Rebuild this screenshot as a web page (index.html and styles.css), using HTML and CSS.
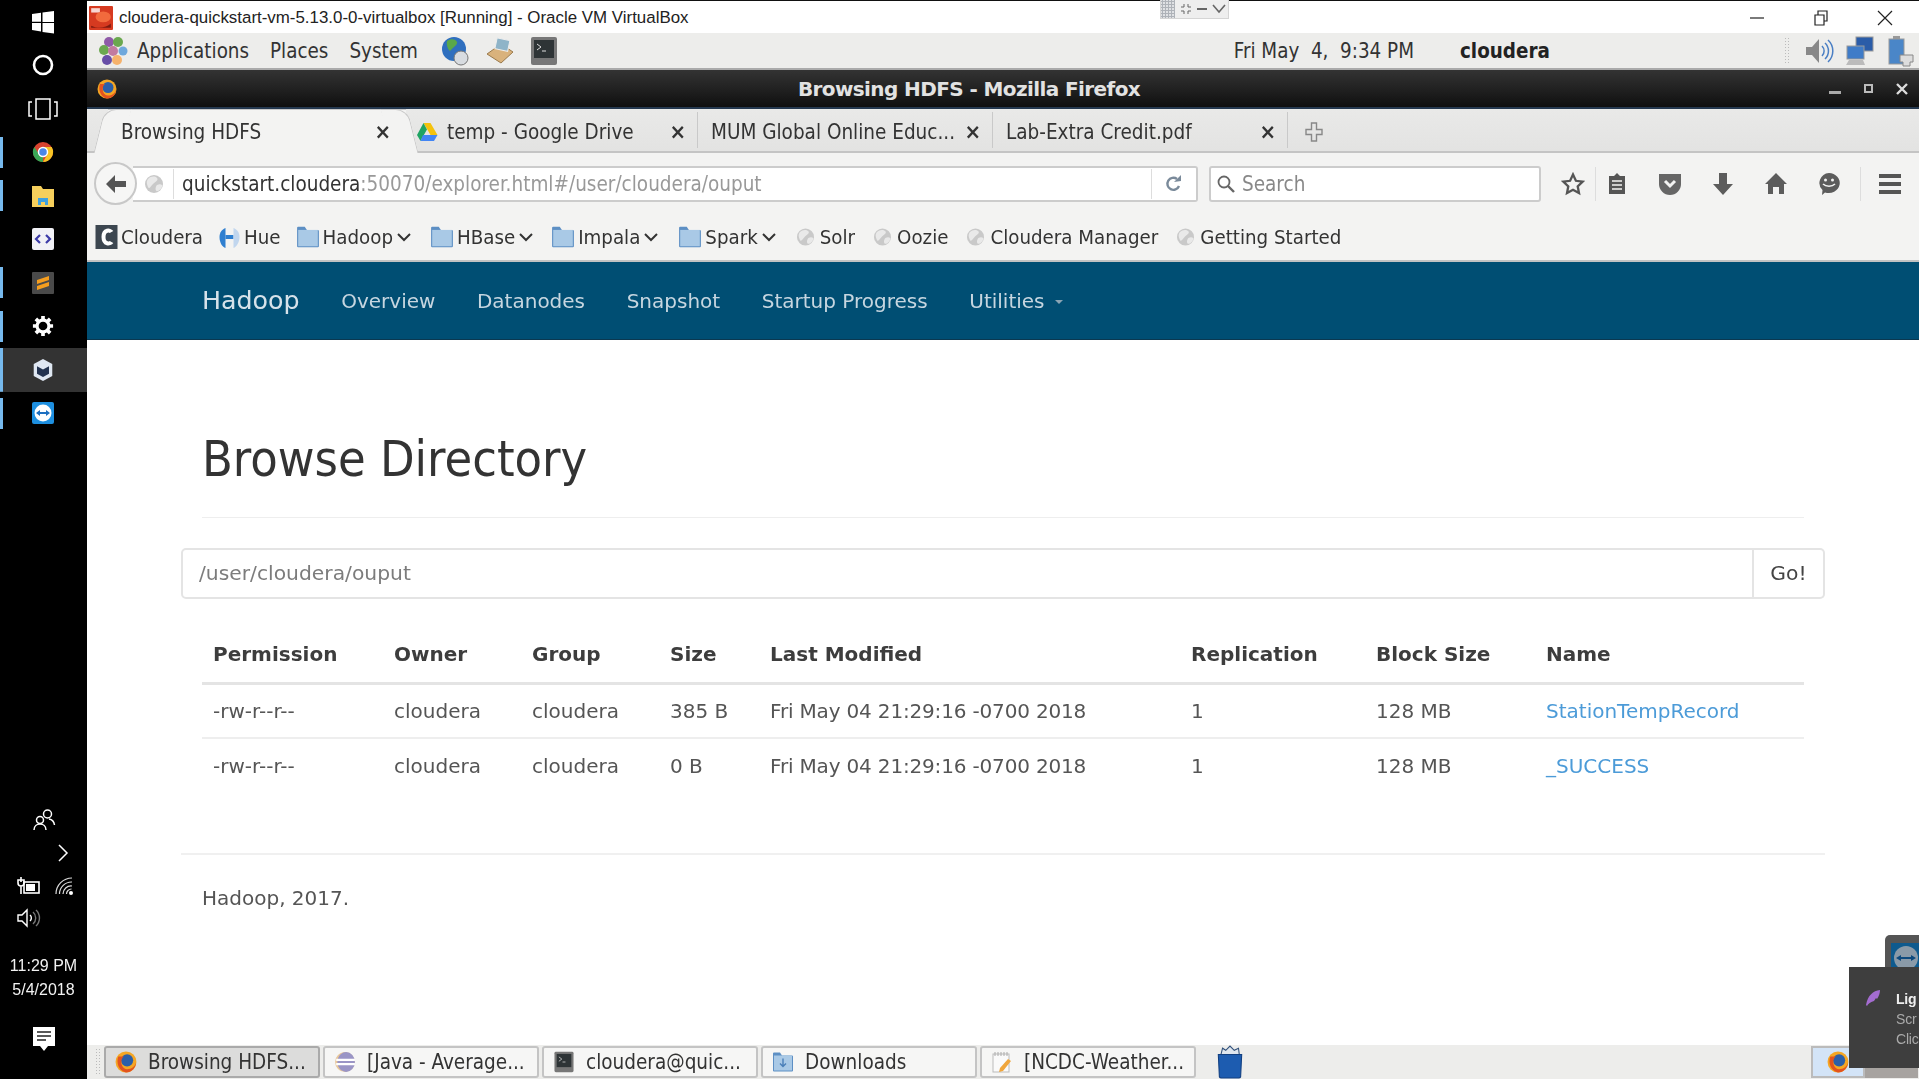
FILE: index.html
```html
<!DOCTYPE html>
<html lang="en">
<head>
  <meta charset="UTF-8">
  <title>Browsing HDFS</title>
  <link rel="stylesheet" href="styles.css">
</head>
<body>
  <aside class="winbar">
    <div class="winbar-top">
      <div class="wb-item"><svg width="24" height="24" viewBox="0 0 24 24"><path fill="#fff" d="M1 4l9-1.300v9H1zM11.500 2.500L23 1v11H11.500zM1 13h9v8.500L1 20zM11.500 13H23v10.500L11.500 22z"/></svg></div>
      <div class="wb-item"><svg width="24" height="24" viewBox="0 0 24 24"><circle cx="12" cy="12" r="9" fill="none" stroke="#fff" stroke-width="2.600"/></svg></div>
      <div class="wb-item"><svg width="30" height="22" viewBox="0 0 30 22"><path fill="none" stroke="#fff" stroke-width="1.500" d="M8 1h14v20H8zM4 4H1v14h3M26 4h3v14h-3"/></svg></div>
      <div class="wb-item on"><svg width="24" height="26" viewBox="0 0 24 24"><circle cx="12" cy="12" r="10" fill="#d8432f"/><path fill="#3aa757" d="M12 22a10 10 0 0 1-8.700-15L8 14l4 3z"/><path fill="#f7c325" d="M12 22a10 10 0 0 0 8.700-15H12l4 8z"/><circle cx="12" cy="12" r="4.500" fill="#4a86e8" stroke="#fff" stroke-width="1.500"/></svg></div>
      <div class="wb-item on"><svg width="24" height="24" viewBox="0 0 24 24"><path fill="#f6cf5c" d="M1 2h9l2 3h11v18H1z"/><path fill="#3fa1e0" d="M7 14h10v7h-3v-3h-4v3H7z"/></svg></div>
      <div class="wb-item"><svg width="24" height="26" viewBox="0 0 24 24"><rect x="1" y="1" width="22" height="22" rx="2" fill="#f1f1f6"/><path fill="none" stroke="#3b3aa8" stroke-width="2.200" d="M9 8l-4 4 4 4M15 8l4 4-4 4"/></svg></div>
      <div class="wb-item on"><svg width="24" height="26" viewBox="0 0 24 24"><rect x="1" y="1" width="22" height="22" rx="1" fill="#4a4a4a"/><path fill="#f59e1f" d="M18 5v4L6 13V9zM18 11v4L6 19v-4z"/></svg></div>
      <div class="wb-item on"><svg width="22" height="22" viewBox="0 0 24 24"><circle cx="12" cy="12" r="6.500" fill="none" stroke="#fff" stroke-width="3.500"/><path stroke="#fff" stroke-width="4" d="M12 1v5M12 18v5M1 12h5M18 12h5M4.200 4.200l3.500 3.500M16.300 16.300l3.500 3.500M4.200 19.800l3.500-3.500M16.300 7.700l3.500-3.500"/></svg></div>
      <div class="wb-item on active"><svg width="22" height="24" viewBox="0 0 20 22"><path fill="#dfe7f2" d="M10 1l8.500 4.500v11L10 21l-8.500-4.500v-11z"/><path fill="#22324f" d="M10 10.500l5.500-3v7L10 17.500zM4.500 7.500l5.500 3v7l-5.500-3z"/></svg></div>
      <div class="wb-item on"><svg width="24" height="24" viewBox="0 0 24 24"><rect x="1" y="1" width="22" height="22" rx="2" fill="#1d8fe0"/><circle cx="12" cy="12" r="8.500" fill="#fff"/><path fill="#1d6fc0" d="M5 12l4-3v2h6V9l4 3-4 3v-2H9v2z"/></svg></div>
    </div>
    <div class="winbar-bottom">
      <svg class="wb-people" width="24" height="24" viewBox="0 0 24 24"><g fill="none" stroke="#fff" stroke-width="1.500"><circle cx="15.500" cy="6" r="4"/><circle cx="8" cy="12" r="3.500"/><path d="M2 22c0-4 3-6 6-6s6 2 6 6M17 11c3 .5 5 2.500 5.500 6"/></g></svg>
      <svg class="wb-chev" width="12" height="20" viewBox="0 0 12 20"><path fill="none" stroke="#fff" stroke-width="1.500" d="M2 2l8 8-8 8"/></svg>
      <div class="wb-tray">
        <svg width="24" height="20" viewBox="0 0 24 20"><g fill="none" stroke="#fff" stroke-width="1.600"><rect x="7" y="6" width="15" height="11" /><path d="M4 1v5M1 4h6v3a3 3 0 0 1-6 0zM4 10v8"/></g><rect x="9" y="8" width="9" height="7" fill="#fff"/></svg>
        <svg width="20" height="20" viewBox="0 0 20 20"><g fill="none" stroke="#ddd" stroke-width="1.200"><path d="M1 18A16 16 0 0 1 17 2M4.500 18A12 12 0 0 1 17 6M8 18a8 8 0 0 1 9-8M11.500 18a5 5 0 0 1 5-5"/></g><circle cx="16" cy="17" r="2" fill="#fff"/></svg>
      </div>
      <div class="wb-tray">
        <svg width="24" height="22" viewBox="0 0 24 22"><g fill="none" stroke="#fff" stroke-width="1.400"><path d="M1 8h4l5-5v16l-5-5H1z"/><path d="M13 8a4 4 0 0 1 0 6"/><path stroke="#777" d="M16 5a8 8 0 0 1 0 12M19 3a11 11 0 0 1 0 16"/></g></svg>
        <span class="wb-spacer"></span>
      </div>
      <div class="wb-clock">11:29 PM<br>5/4/2018</div>
      <svg class="wb-note" width="24" height="26" viewBox="0 0 24 26"><path fill="#fff" d="M1 1h22v19h-7l-4 5-4-5H1z"/><path stroke="#222" stroke-width="1.600" d="M5 6h14M5 10h14M5 14h9"/></svg>
    </div>
  </aside>

  <div class="vm">
    <header class="vbox-title">
      <svg width="24" height="24" viewBox="0 0 22 22"><rect width="22" height="22" rx="1" fill="#d63a20"/><path fill="#7d1a10" d="M2 18c6 3 14 2 18-2v4H2z"/><path fill="#fff" d="M2 2h8v4H2z" opacity=".8"/><ellipse cx="13" cy="10" rx="7" ry="5" fill="#f26a3d"/></svg>
      <span class="vbox-name">cloudera-quickstart-vm-5.13.0-0-virtualbox [Running] - Oracle VM VirtualBox</span>
      <div class="win-btns">
        <svg width="16" height="16" viewBox="0 0 16 16"><path stroke="#222" stroke-width="1.200" d="M1 8h14"/></svg>
        <svg width="16" height="16" viewBox="0 0 16 16"><path fill="none" stroke="#222" stroke-width="1.200" d="M2 5h9v10H2zM5 5V1h9v10h-3"/></svg>
        <svg width="16" height="16" viewBox="0 0 16 16"><path stroke="#222" stroke-width="1.200" d="M1 1l14 14M15 1L1 15"/></svg>
      </div>
    </header>

    <div class="gnome-panel">
      <svg class="g-apps" width="30" height="30" viewBox="0 0 30 30"><circle cx="11" cy="6" r="5" fill="#8e5aa8"/><circle cx="20" cy="6" r="5" fill="#6aa84f"/><circle cx="6" cy="14" r="5" fill="#6aa84f"/><circle cx="25" cy="15" r="4.500" fill="#6fa8dc"/><circle cx="15" cy="15" r="5" fill="#c27ba0"/><circle cx="9" cy="24" r="5" fill="#674ea7"/><circle cx="19" cy="24" r="5" fill="#f6b26b"/></svg>
      <span class="g-menu">Applications</span>
      <span class="g-menu">Places</span>
      <span class="g-menu">System</span>
      <div class="g-launch">
        <svg width="30" height="32" viewBox="0 0 30 32"><circle cx="14" cy="14" r="12" fill="#2f6fbe"/><path fill="#5aa84a" d="M7 6c4-3 9-2 10 1s-4 5-6 8-5-5-4-9z"/><circle cx="21" cy="23" r="7" fill="#d8dce0" stroke="#777"/></svg>
        <svg width="30" height="30" viewBox="0 0 30 30"><path fill="#d9b27c" stroke="#9a7a4c" d="M2 18L16 8l12 8-12 11z"/><rect x="11" y="3" width="13" height="11" fill="#8fb4c8" stroke="#eee" transform="rotate(12 17 8)"/></svg>
        <svg width="28" height="30" viewBox="0 0 28 30"><rect x="1" y="1" width="26" height="28" rx="2" fill="#777"/><rect x="4" y="4" width="20" height="18" fill="#2e3436"/><path fill="none" stroke="#ddd" d="M7 8l4 3-4 3M12 15h4"/></svg>
      </div>
      <span class="g-clock">Fri May&nbsp; 4,&nbsp; 9:34 PM</span>
      <span class="g-user">cloudera</span>
      <div class="g-tray">
        <span class="tray-grip"></span>
        <svg width="30" height="30" viewBox="0 0 30 30"><path fill="#888" d="M2 11h6l7-8v24l-7-8H2z"/><g fill="none" stroke="#4a7fc4" stroke-width="1.500"><path d="M18 10a7 7 0 0 1 0 10M21 7a11 11 0 0 1 0 16M24 4a15 15 0 0 1 0 22"/></g></svg>
        <svg width="30" height="30" viewBox="0 0 30 30"><rect x="11" y="1" width="17" height="14" fill="#2a5ca8" stroke="#999"/><rect x="2" y="10" width="17" height="13" fill="#3f7cc8" stroke="#999"/><path fill="#bbb" d="M4 24h14l2 5H1z"/></svg>
        <svg width="30" height="32" viewBox="0 0 30 32"><rect x="3" y="4" width="15" height="25" fill="#4a86c8" stroke="#999"/><rect x="7" y="1" width="7" height="3" fill="#999"/><path fill="#ddd" stroke="#888" d="M14 20h13v7h-3v4h-7v-4h-3z"/></svg>
      </div>
    </div>

    <div class="ff-title">
      <svg class="ff-logo ff-logo-title" width="20" height="20" viewBox="0 0 20 20"><use href="#fox"/></svg>
      <span class="ff-name">Browsing HDFS - Mozilla Firefox</span>
      <div class="ff-btns">
        <span class="ff-min"></span>
        <span class="ff-max"></span>
        <svg width="12" height="12" viewBox="0 0 12 12"><path stroke="#ddd" stroke-width="2.400" d="M1 1l10 10M11 1L1 11"/></svg>
      </div>
    </div>

    <div class="tabstrip">
      <div class="tab tab-current"><span class="tab-label">Browsing HDFS</span><span class="tab-x">×</span></div>
      <div class="tab tab-drive"><svg width="22" height="20" viewBox="0 0 22 20"><path fill="#f4c20d" d="M7.500 1h7l7 12h-7z"/><path fill="#1fa463" d="M7.500 1L1 13l3.500 6L11 7.500z"/><path fill="#4285f4" d="M7 13h14.500L18 19H4.500z"/></svg><span class="tab-label">temp - Google Drive</span><span class="tab-x">×</span></div>
      <div class="tab tab-mum"><span class="tab-label">MUM Global Online Educ...</span><span class="tab-x">×</span></div>
      <div class="tab tab-lab"><span class="tab-label">Lab-Extra Credit.pdf</span><span class="tab-x">×</span></div>
      <svg class="tab-new" width="18" height="20" viewBox="0 0 18 20"><path fill="none" stroke="#888" stroke-width="1.400" d="M6.500 1h5v6.500H17v5h-5.500V19h-5v-6.500H1v-5h5.500z"/></svg>
    </div>

    <div class="navbar-ff">
      <div class="back-btn"><svg width="22" height="20" viewBox="0 0 22 20"><path fill="#555" d="M10 1v6h11v6H10v6L1 10z"/></svg></div>
      <div class="urlbar">
        <svg class="globe" width="20" height="20" viewBox="0 0 20 20"><use href="#globe"/></svg>
        <span class="url-text"><b>quickstart.cloudera</b>:50070/explorer.html#/user/cloudera/ouput</span>
        <span class="url-reload"><svg width="18" height="18" viewBox="0 0 18 18"><path fill="none" stroke="#7a8a9a" stroke-width="2.400" d="M14 11a6 6 0 1 1-2-7"/><path fill="#7a8a9a" d="M9 7l7-1V0z"/></svg></span>
      </div>
      <div class="searchbar">
        <svg width="20" height="20" viewBox="0 0 20 20"><circle cx="8" cy="8" r="5.500" fill="none" stroke="#666" stroke-width="1.800"/><path stroke="#666" stroke-width="2.400" d="M12 12l6 6"/></svg>
        <span>Search</span>
      </div>
      <div class="ff-tools">
        <svg class="t-star" width="24" height="24" viewBox="0 0 24 24"><path fill="none" stroke="#555" stroke-width="2.300" d="M12 2.500l2.900 6.300 6.800.8-5 4.700 1.300 6.800-6-3.400-6 3.400 1.300-6.800-5-4.700 6.800-.8z"/></svg>
        <svg class="t-list" width="20" height="24" viewBox="0 0 20 24"><path fill="#555" d="M7 4l3-3 3 3h5v18H2V4z"/><path stroke="#f3f3f2" stroke-width="1.500" d="M5 9h10M5 13h10M5 17h10"/></svg>
        <svg width="24" height="24" viewBox="0 0 24 24"><path fill="#666" d="M1 2h22v10a11 11 0 0 1-22 0z"/><path fill="none" stroke="#f3f3f2" stroke-width="3" d="M7 9l5 5 5-5"/></svg>
        <svg width="24" height="24" viewBox="0 0 24 24"><path fill="#5c5c5c" d="M8 1h8v11h6L12 23 2 12h6z"/></svg>
        <svg width="24" height="24" viewBox="0 0 24 24"><path fill="#5c5c5c" d="M12 1l11 11h-3v10h-5v-7H9v7H4V12H1z"/></svg>
        <svg width="24" height="26" viewBox="0 0 24 24"><path fill="#5c5c5c" d="M12 1a11 10 0 1 1-4 19.400L5 23l.5-5A10.500 10 0 0 1 12 1z"/><circle cx="8.500" cy="8" r="1.500" fill="#f3f3f2"/><circle cx="15.500" cy="8" r="1.500" fill="#f3f3f2"/><path fill="none" stroke="#f3f3f2" stroke-width="1.600" d="M6 12c3 3 9 3 12 0"/></svg>
        <svg class="t-menu" width="24" height="22" viewBox="0 0 24 22"><path stroke="#555" stroke-width="4" d="M1 3h22M1 11h22M1 19h22"/></svg>
      </div>
    </div>

    <div class="bookmarks">
      <div class="bm bm-tight"><svg width="23" height="24" viewBox="0 0 22 24"><rect width="22" height="24" fill="#3c4650"/><path fill="none" stroke="#fff" stroke-width="4" d="M16 7c-1-2-8-3-8 5s7 7 8 5"/></svg>Cloudera</div>
      <div class="bm bm-tight"><svg width="23" height="22" viewBox="0 0 22 22"><path fill="#2f7fd0" d="M1 11c0-5 3-8 6-9v20c-3-1-6-5-6-11z"/><path fill="#2f7fd0" d="M7 9h8v4H7z"/><path fill="#c1d6ee" d="M15 2c3 1 6 4 6 9s-3 10-6 11z"/></svg>Hue</div>
      <div class="bm bm-hadoop"><svg class="folder" width="24" height="24" viewBox="1 2 22 21"><use href="#folder"/></svg>Hadoop<svg class="caret" width="14" height="10" viewBox="0 0 14 10"><path fill="none" stroke="#333" stroke-width="2" d="M1 2l6 6 6-6"/></svg></div>
      <div class="bm bm-hbase"><svg class="folder" width="24" height="24" viewBox="1 2 22 21"><use href="#folder"/></svg>HBase<svg class="caret" width="14" height="10" viewBox="0 0 14 10"><path fill="none" stroke="#333" stroke-width="2" d="M1 2l6 6 6-6"/></svg></div>
      <div class="bm bm-impala"><svg class="folder" width="24" height="24" viewBox="1 2 22 21"><use href="#folder"/></svg>Impala<svg class="caret" width="14" height="10" viewBox="0 0 14 10"><path fill="none" stroke="#333" stroke-width="2" d="M1 2l6 6 6-6"/></svg></div>
      <div class="bm bm-spark"><svg class="folder" width="24" height="24" viewBox="1 2 22 21"><use href="#folder"/></svg>Spark<svg class="caret" width="14" height="10" viewBox="0 0 14 10"><path fill="none" stroke="#333" stroke-width="2" d="M1 2l6 6 6-6"/></svg></div>
      <div class="bm bm-page"><svg width="19" height="20" viewBox="0 0 20 20"><use href="#globe"/></svg>Solr</div>
      <div class="bm bm-page"><svg width="19" height="20" viewBox="0 0 20 20"><use href="#globe"/></svg>Oozie</div>
      <div class="bm bm-page"><svg width="19" height="20" viewBox="0 0 20 20"><use href="#globe"/></svg>Cloudera Manager</div>
      <div class="bm bm-page"><svg width="19" height="20" viewBox="0 0 20 20"><use href="#globe"/></svg>Getting Started</div>
    </div>

    <nav class="hadoop-nav">
      <span class="brand">Hadoop</span>
      <span class="nav-link">Overview</span>
      <span class="nav-link">Datanodes</span>
      <span class="nav-link">Snapshot</span>
      <span class="nav-link">Startup Progress</span>
      <span class="nav-link">Utilities <i class="nav-caret"></i></span>
    </nav>

    <main class="page">
      <div class="page-header"><h1>Browse Directory</h1></div>

      <div class="path-form">
        <div class="path-input">/user/cloudera/ouput</div>
        <div class="go-btn">Go!</div>
      </div>

      <table class="listing">
        <thead>
          <tr>
            <th class="c-perm">Permission</th>
            <th class="c-owner">Owner</th>
            <th class="c-group">Group</th>
            <th class="c-size">Size</th>
            <th class="c-mod">Last Modified</th>
            <th class="c-rep">Replication</th>
            <th class="c-block">Block Size</th>
            <th>Name</th>
          </tr>
        </thead>
        <tbody>
          <tr>
            <td>-rw-r--r--</td><td>cloudera</td><td>cloudera</td><td>385 B</td>
            <td class="d-mod">Fri May 04 21:29:16 -0700 2018</td><td>1</td><td>128 MB</td>
            <td><a href="#">StationTempRecord</a></td>
          </tr>
          <tr>
            <td>-rw-r--r--</td><td>cloudera</td><td>cloudera</td><td>0 B</td>
            <td class="d-mod">Fri May 04 21:29:16 -0700 2018</td><td>1</td><td>128 MB</td>
            <td><a href="#">_SUCCESS</a></td>
          </tr>
        </tbody>
      </table>

      <hr class="foot-rule">
      <p class="foot">Hadoop, 2017.</p>
    </main>

    <footer class="gnome-tasks">
      <span class="grip"></span>
      <div class="task task-on"><svg width="22" height="22" viewBox="0 0 20 20"><use href="#fox"/></svg><span>Browsing HDFS...</span></div>
      <div class="task"><svg width="22" height="22" viewBox="0 0 20 20"><circle cx="10" cy="10" r="9" fill="#e8c79a"/><ellipse cx="11" cy="10" rx="8" ry="9" fill="#9a95c6"/><path stroke="#fff" stroke-width="2" d="M2 8h17M2 12h17"/></svg><span>[Java - Average...</span></div>
      <div class="task"><svg width="22" height="22" viewBox="0 0 28 30"><rect x="1" y="1" width="26" height="28" rx="2" fill="#777"/><rect x="4" y="4" width="20" height="18" fill="#2e3436"/><path fill="none" stroke="#ddd" d="M7 8l4 3-4 3M12 15h4"/></svg><span>cloudera@quic...</span></div>
      <div class="task"><svg width="22" height="22" viewBox="1 2 22 21"><use href="#folder"/><path fill="none" stroke="#4a7fb8" stroke-width="1.400" d="M12 9v8M9 14l3 3 3-3"/></svg><span>Downloads</span></div>
      <div class="task"><svg width="22" height="22" viewBox="0 0 22 22"><rect x="2" y="3" width="16" height="18" fill="#fafafa" stroke="#bbb"/><path stroke="#aaa" d="M4 1v4M7 1v4M10 1v4M13 1v4M16 1v4"/><path fill="#f0a63c" d="M17 8l3 2-8 10-4 1 1-4z"/></svg><span>[NCDC-Weather...</span></div>
      <svg class="trash" width="28" height="34" viewBox="0 0 26 32"><path fill="#dfe6ee" stroke="#31507a" d="M4 11l2-8 3 2 4-4 4 4 4-2 1 8z"/><path fill="#1d5cb0" stroke="#123f80" d="M2 9h22l-1 21a2 2 0 0 1-2 1H5a2 2 0 0 1-2-1z"/></svg>
      <div class="pager"><div class="pager-on"><svg width="22" height="22" viewBox="0 0 20 20"><use href="#fox"/></svg></div><div class="pager-off"></div></div>
    </footer>
  </div>

  <!-- stuff that floats over the vm window -->
  <div class="vm-mini">
    <span class="mini-grip"></span>
    <svg width="12" height="12" viewBox="0 0 12 12"><path fill="none" stroke="#666" d="M1 4h3V1M8 1v3h3M1 8h3v3M11 8H8v3"/></svg>
    <span class="mini-dash"></span>
    <svg width="14" height="10" viewBox="0 0 14 10"><path fill="none" stroke="#666" stroke-width="1.600" d="M1 1l6 7 6-7"/></svg>
  </div>
  <div class="tv-tab"><svg width="30" height="30" viewBox="0 0 30 30"><rect width="30" height="30" fill="#0e5a8e"/><circle cx="15" cy="15" r="12" fill="#8a9aa8"/><path fill="#0e4a7e" d="M5 15l5-3v2h10v-2l5 3-5 3v-2H10v2z"/></svg></div>
  <div class="toast">
    <svg width="16" height="18" viewBox="0 0 16 18"><path fill="#a46cd0" d="M15 1C8 2 3 6 1 16l1 1c1-2 3-4 7-5l2-3 1 1c2-3 3-6 3-9z"/></svg>
    <div class="toast-text"><b>Lig</b><span>Scr</span><span>Clic</span></div>
  </div>

  <svg class="defs" width="0" height="0">
    <defs>
      <g id="fox"><circle cx="10" cy="10" r="9.500" fill="#f5a623"/><circle cx="11" cy="8.500" r="5.500" fill="#2c5fa8"/><path fill="#e2531f" d="M3 5c-2 5 0 13 7 14.500 5 0 9-4 9-9-1 4-4 6-8 6S5 12 6 8c0-1 1-2 2-3-2 0-3 0-5 0z"/></g>
      <g id="globe"><circle cx="10" cy="10" r="9" fill="#c9c9c9"/><path fill="#e9e9e9" d="M4 5c3-3 7-3 9-1s-2 4-4 6-4 6-5 3-2-5 0-8zM13 11c2-1 4-1 5 0s-1 5-4 6-3-4-1-6z"/></g>
      <g id="folder"><path fill="#5d8fc4" d="M2 4a1 1 0 0 1 1-1h6l2 3h10a1 1 0 0 1 1 1v14a1 1 0 0 1-1 1H3a1 1 0 0 1-1-1z"/><path fill="#a9c9e6" d="M3 6h18v15H3z"/></g>
    </defs>
  </svg>
</body>
</html>
```

FILE: styles.css
```css
* {
  box-sizing: border-box;
}
html, body {
  margin: 0;
  height: 100%;
  overflow: hidden;
}
body {
  display: flex;
  width: 1919px;
  height: 1079px;
  background: #fff;
  font-family: "DejaVu Sans", sans-serif;
  color: #333;
  position: relative;
}
svg {
  flex: none;
  display: block;
}
.defs {
  position: absolute;
}

/* windows taskbar on the left */
.winbar {
  width: 87px;
  flex: none;
  background: #000;
  display: flex;
  flex-direction: column;
  justify-content: space-between;
  color: #fff;
  filter: blur(.4px);
}
.wb-item {
  height: 43.500px;
  display: flex;
  align-items: center;
  justify-content: center;
  padding-right: 1px;
}
.wb-item.on {
  background: linear-gradient(#76b9ed, #76b9ed) left center / 3px 31px no-repeat;
}
.wb-item.active {
  background: linear-gradient(#76b9ed, #76b9ed) left center / 3px 100% no-repeat, #333;
}
.winbar-bottom {
  display: flex;
  flex-direction: column;
  align-items: center;
  padding-bottom: 27px;
}
.wb-chev {
  align-self: flex-end;
  margin: 11px 18px 7px 0;
}
.wb-tray {
  display: flex;
  width: 100%;
  justify-content: space-between;
  align-items: center;
  padding: 0 12px 0 17px;
  height: 32px;
}
.wb-spacer {
  width: 20px;
}
.wb-clock {
  font-family: "Liberation Sans", sans-serif;
  font-size: 16px;
  line-height: 24px;
  text-align: center;
  margin-top: 20px;
  margin-bottom: 24px;
  color: #f2f2f2;
}

.vm {
  flex: 1;
  min-width: 0;
  display: flex;
  flex-direction: column;
  filter: blur(.4px);
}

/* virtualbox title */
.vbox-title {
  height: 33px;
  flex: none;
  border-top: 1px solid #111;
  background: #fff;
  display: flex;
  align-items: center;
  padding: 1px 0 0 2px;
  font-family: "Liberation Sans", sans-serif;
  font-size: 16.900px;
  color: #222;
}
.vbox-name {
  margin-left: 6px;
}
.win-btns {
  margin-left: auto;
  display: flex;
  gap: 48px;
  padding-right: 26px;
}

/* gnome panel */
.gnome-panel {
  height: 37px;
  flex: none;
  background: #ededeb;
  display: flex;
  align-items: center;
  padding-left: 11px;
  border-bottom: 2px solid #aaa;
  font-family: "DejaVu Sans Condensed", "DejaVu Sans", sans-serif;
  font-stretch: condensed;
  font-size: 20.400px;
  color: #333;
}
.g-apps {
  margin-right: 9px;
}
.g-menu {
  margin-right: 21px;
}
.g-launch {
  display: flex;
  gap: 15px;
  margin-left: 1px;
  align-items: center;
}
.g-clock {
  margin-left: 676px;
}
.g-user {
  font-weight: bold;
  margin-left: 46px;
  color: #222;
}
.g-tray {
  margin-left: auto;
  display: flex;
  gap: 11px;
  align-items: center;
  height: 32px;
  padding-right: 3px;
}
.tray-grip {
  width: 5px;
  height: 28px;
  margin-right: 4px;
  background: radial-gradient(#bbb 1px, transparent 1px) 0 0 / 3px 3px;
}

/* firefox */
.ff-title {
  height: 39px;
  flex: none;
  background: linear-gradient(#333, #1e1e1e 60%, #0f0f0f);
  border-bottom: 2px solid #24384f;
  display: flex;
  align-items: center;
  position: relative;
  padding-left: 10px;
}
.ff-name {
  flex: 1;
  text-align: center;
  font-size: 20px;
  font-weight: bold;
  letter-spacing: -.600px;
  color: #e2e2e2;
  padding-right: 8px;
}
.ff-btns {
  display: flex;
  align-items: center;
  gap: 23px;
  padding-right: 11px;
}
.ff-min {
  width: 12px;
  height: 3px;
  background: #aaa;
  margin-top: 8px;
}
.ff-max {
  width: 9px;
  height: 9px;
  border: 2px solid #bbb;
}

.tabstrip {
  height: 44px;
  flex: none;
  background: linear-gradient(#e9e9e8, #e3e3e2);
  border-bottom: 2px solid #c4c4c4;
  display: flex;
  align-items: stretch;
  padding-left: 21px;
  font-family: "DejaVu Sans Condensed", "DejaVu Sans", sans-serif;
  font-stretch: condensed;
  font-size: 20.500px;
  color: #333;
}
.tab {
  display: flex;
  align-items: center;
  padding: 3px 11px 0 13px;
  position: relative;
}
.tab-x {
  margin-left: auto;
  font-size: 22px;
  font-weight: bold;
  color: #333;
}
.tab-current {
  width: 298px;
  background: #f3f3f2;
  border-top: 1px solid #c8c8c8;
  margin-bottom: -2px;
  padding: 0 15px 0 13px;
}
.tab-current > * {
  position: relative;
  z-index: 1;
}
/* the sloped ends of the current tab */
.tab-current::before,
.tab-current::after {
  content: "";
  position: absolute;
  top: -1px;
  bottom: 0;
  width: 26px;
  background: #f3f3f2;
  border-top: 1px solid #c8c8c8;
}
.tab-current::before {
  left: -9px;
  border-left: 1px solid #c8c8c8;
  border-radius: 12px 0 0 0;
  transform: skewX(-14deg);
}
.tab-current::after {
  right: -7px;
  border-right: 1px solid #c8c8c8;
  border-radius: 0 12px 0 0;
  transform: skewX(14deg);
}
.tab-drive {
  width: 292px;
  gap: 9px;
  padding-left: 10px;
  border-right: 1px solid #c9c9c9;
  margin: 3px 0;
}
.tab-mum {
  width: 295px;
  border-right: 1px solid #c9c9c9;
  margin: 3px 0;
}
.tab-lab {
  width: 295px;
  border-right: 1px solid #c9c9c9;
  margin: 3px 0;
}
.tab-new {
  align-self: center;
  margin: 3px 0 0 17px;
}

.navbar-ff {
  height: 54px;
  flex: none;
  background: #f3f3f2;
  display: flex;
  align-items: center;
  padding-left: 7px;
  padding-top: 7px;
  position: relative;
  font-family: "DejaVu Sans Condensed", "DejaVu Sans", sans-serif;
  font-stretch: condensed;
  font-size: 20.500px;
}
.back-btn {
  width: 43px;
  height: 43px;
  border-radius: 50%;
  border: 2px solid #c8c8c8;
  background: #f6f6f5;
  display: flex;
  align-items: center;
  justify-content: center;
  position: relative;
  z-index: 1;
  flex: none;
}
.urlbar {
  width: 1065px;
  height: 36px;
  margin-left: -4px;
  background: #fff;
  border: 2px solid #ccc;
  border-left: none;
  border-radius: 0 3px 3px 0;
  display: flex;
  align-items: center;
  padding-left: 11px;
  color: #999;
}
.url-text {
  margin-left: 9px;
  padding-left: 8px;
  border-left: 1px solid #ddd;
  flex: 1;
  line-height: 30px;
}
.url-text b {
  font-weight: normal;
  color: #333;
}
.url-reload {
  width: 45px;
  height: 30px;
  border-left: 1px solid #ddd;
  display: flex;
  align-items: center;
  justify-content: center;
}
.searchbar {
  width: 332px;
  height: 36px;
  margin-left: 11px;
  background: #fff;
  border: 2px solid #ccc;
  border-radius: 3px;
  display: flex;
  align-items: center;
  gap: 6px;
  padding-left: 5px;
  color: #888;
}
.ff-tools {
  display: flex;
  align-items: center;
  gap: 29px;
  margin-left: 20px;
}
.t-star {
  margin-right: -19px;
}
.t-list {
  box-sizing: content-box;
  padding: 5px 0 5px 11px;
  border-left: 1px solid #ddd;
  margin-right: 2px;
}
.t-menu {
  box-sizing: content-box;
  padding: 6px 0 6px 17px;
  border-left: 1px solid #ddd;
  margin-left: -10px;
}

.bookmarks {
  height: 55px;
  flex: none;
  background: #f3f3f2;
  border-bottom: 2px solid #c2c2c2;
  display: flex;
  align-items: center;
  gap: 17px;
  padding: 7px 0 0 8px;
  font-family: "DejaVu Sans Condensed", "DejaVu Sans", sans-serif;
  font-stretch: condensed;
  font-size: 20.300px;
  color: #333;
}
.bm {
  display: flex;
  align-items: center;
  gap: 3px;
}
.bm-tight {
  margin-right: -2px;
}
.bm-hadoop {
  margin-right: 2px;
}
.bm-hbase {
  margin-right: 1px;
}
.bm-impala {
  margin-right: 3px;
}
.bm-spark {
  margin-right: 2px;
}
.bm-page {
  gap: 5px;
  margin-left: 1px;
}
.caret {
  margin-left: 1px;
}

/* hadoop page, bootstrap-ish */
.hadoop-nav {
  height: 78px;
  flex: none;
  background: #004e73;
  border-bottom: 1px solid #0b3850;
  display: flex;
  align-items: center;
  padding-left: 115px;
  color: #c6d6e0;
  font-size: 20px;
  gap: 41.600px;
}
.brand {
  font-size: 25.300px;
  color: #d6e2ea;
}
.nav-caret {
  display: inline-block;
  width: 0;
  height: 0;
  border: 4px solid transparent;
  border-top-color: #8aa4b4;
  border-bottom: none;
  vertical-align: middle;
  margin-left: 4px;
}
.page {
  flex: 1;
  min-height: 0;
  background: #fff;
  padding: 0 94px 0 94px;
  color: #555;
}
.page-header {
  margin: 0 21px;
  height: 178px;
  border-bottom: 1px solid #eee;
  display: flex;
  align-items: flex-end;
  padding-bottom: 28px;
}
h1 {
  margin: 0;
  font-family: "DejaVu Sans Condensed", "DejaVu Sans", sans-serif;
  font-stretch: condensed;
  font-size: 50px;
  font-weight: normal;
  color: #333;
  line-height: 60px;
}
.path-form {
  display: flex;
  margin-top: 30px;
  height: 51px;
  font-size: 20.300px;
}
.path-input {
  flex: 1;
  border: 2px solid #e4e4e4;
  border-radius: 5px 0 0 5px;
  display: flex;
  align-items: center;
  padding: 0 0 2px 16px;
  color: #7c7c7c;
}
.go-btn {
  width: 71px;
  border: 2px solid #e4e4e4;
  border-left: none;
  border-radius: 0 5px 5px 0;
  display: flex;
  align-items: center;
  justify-content: center;
  color: #444;
  padding-bottom: 2px;
}
.listing {
  width: calc(100% - 42px);
  margin: 28px 21px 0;
  border-collapse: collapse;
  font-size: 20px;
}
.listing th {
  text-align: left;
  font-weight: bold;
  color: #3d3d3d;
  height: 56px;
  padding: 0 11px;
  border-bottom: 3px solid #e4e4e4;
}
.listing td {
  height: 55px;
  padding: 0 11px;
  border-bottom: 2px solid #eee;
}
.listing tr:last-child td {
  border-bottom: none;
}
.listing .d-mod {
  letter-spacing: -.17px;
}
.c-perm { width: 181px; }
.c-owner { width: 138px; }
.c-group { width: 138px; }
.c-size { width: 100px; }
.c-mod { width: 421px; }
.c-rep { width: 185px; }
.c-block { width: 170px; }
.listing a {
  color: #4c9bd8;
  text-decoration: none;
}
.foot-rule {
  margin: 60px 0 0;
  border: none;
  border-top: 2px solid #f0f0f0;
}
.foot {
  margin: 31px 21px 0;
  font-size: 20px;
  color: #555;
}

/* bottom gnome task list */
.gnome-tasks {
  height: 34px;
  flex: none;
  background: #ededeb;
  display: flex;
  align-items: center;
  gap: 3px;
  padding: 0 0 1px 8px;
  font-family: "DejaVu Sans Condensed", "DejaVu Sans", sans-serif;
  font-stretch: condensed;
  font-size: 20.500px;
  color: #333;
}
.grip {
  width: 6px;
  height: 28px;
  background: radial-gradient(#bbb 1px, transparent 1px) 0 0 / 3px 3px;
}
.task {
  width: 216px;
  height: 32px;
  background: #f6f6f5;
  border: 2px solid #c4c4c4;
  border-radius: 3px;
  display: flex;
  align-items: center;
  gap: 11px;
  padding-left: 9px;
  white-space: nowrap;
}
.task-on {
  background: #dcdcdb;
  border-color: #aaa;
}
.trash {
  margin-left: 17px;
}
.pager {
  margin-left: auto;
  display: flex;
  height: 32px;
  width: 107px;
  margin-right: 1px;
}
.pager-on {
  width: 54px;
  background: #d3e4f7;
  border: 2px solid #bbb;
  display: flex;
  align-items: center;
  justify-content: center;
}
.pager-off {
  flex: 1;
  background: #a7a3a0;
}

/* overlays */
.vm-mini {
  position: absolute;
  left: 1160px;
  top: 0;
  width: 69px;
  height: 19px;
  background: #eee;
  border: 1px solid #d5d5d5;
  border-top: none;
  display: flex;
  align-items: center;
  gap: 5px;
}
.mini-grip {
  width: 14px;
  height: 18px;
  background: radial-gradient(#aeb2b8 1.200px, #dfe1e4 1.200px) 0 0 / 3px 3px;
}
.mini-dash {
  width: 10px;
  height: 2px;
  background: #666;
}
.tv-tab {
  position: absolute;
  right: 0;
  top: 935px;
  width: 34px;
  height: 40px;
  background: #555;
  border-radius: 5px 0 0 0;
  padding: 8px 0 0 6px;
}
.toast {
  position: absolute;
  right: 0;
  top: 967px;
  width: 70px;
  height: 101px;
  background: #3e3e3e;
  overflow: hidden;
  display: flex;
  gap: 15px;
  padding: 22px 0 0 16px;
  font-family: "Liberation Sans", sans-serif;
  font-size: 14px;
  color: #aaa;
  filter: blur(.3px);
}
.toast-text {
  display: flex;
  flex-direction: column;
  line-height: 20px;
  white-space: nowrap;
  letter-spacing: -.2px;
}
.toast-text b {
  color: #eee;
}
```
